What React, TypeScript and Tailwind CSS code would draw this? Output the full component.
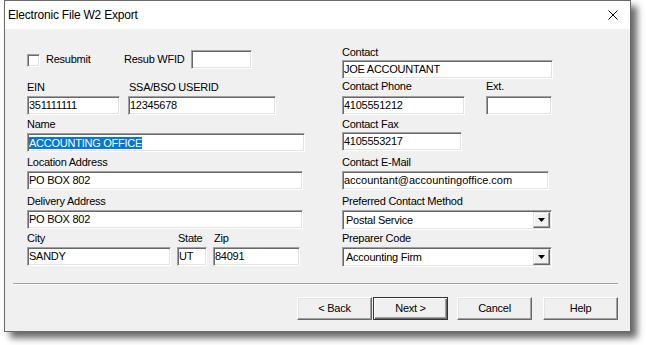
import React from 'react';

// classic sunken 3D edge used by text boxes, combos and the checkbox
const sunken =
  'border border-t-[#a0a0a0] border-l-[#a0a0a0] border-b-white border-r-white shadow-[inset_1px_1px_0_#696969,inset_-1px_-1px_0_#e3e3e3]';

const Label: React.FC<{ children: React.ReactNode; className?: string }> = ({ children, className = '' }) => (
  <div className={`h-[13px] leading-[13px] whitespace-nowrap ${className}`}>{children}</div>
);

const Field: React.FC<{ value?: string; className?: string; selected?: boolean }> = ({
  value = '',
  className = '',
  selected = false,
}) => (
  <div className={`h-[19px] bg-white ${sunken} flex items-center pl-[1px] overflow-hidden whitespace-nowrap ${className}`}>
    {selected ? <span className="bg-[#0078d7] text-white leading-[12px]">{value}</span> : <span>{value}</span>}
  </div>
);

const Combo: React.FC<{ value: string; className?: string }> = ({ value, className = '' }) => (
  <div className={`h-[20px] w-[210px] bg-white ${sunken} flex items-center ${className}`}>
    <span className="flex-1 pl-[3px] whitespace-nowrap">{value}</span>
    <div className="mr-[1px] h-[16px] w-[17px] bg-[#f0f0f0] border border-t-[#e3e3e3] border-l-[#e3e3e3] border-b-[#696969] border-r-[#696969] shadow-[inset_-1px_-1px_0_#a0a0a0,inset_1px_1px_0_#fff] flex items-center justify-center">
      <svg width="7" height="4" viewBox="0 0 7 4">
        <path d="M0 0h7L3.5 4z" fill="#000" />
      </svg>
    </div>
  </div>
);

const DlgButton: React.FC<{ label: string; isDefault?: boolean; className?: string }> = ({
  label,
  isDefault = false,
  className = '',
}) => (
  <button
    className={
      isDefault
        ? `h-[23px] w-[75px] bg-[#f0f0f0] border border-[#333] shadow-[inset_1px_1px_0_#fff,inset_-1px_-1px_0_#696969,inset_-2px_-2px_0_#a0a0a0] ${className}`
        : `h-[23px] w-[75px] bg-[#f0f0f0] border border-t-white border-l-white border-b-[#696969] border-r-[#696969] shadow-[inset_-1px_-1px_0_#a0a0a0,inset_1px_1px_0_#e3e3e3] ${className}`
    }
  >
    {label}
  </button>
);

const App: React.FC = () => {
  return (
    <div className="w-[646px] h-[345px] bg-white overflow-hidden font-['Liberation_Sans',Arial,sans-serif] text-[11px] tracking-[-0.25px] text-black">
      <div className="ml-[4px] w-[627px] h-[332px] border border-[#6a6a6a] flex flex-col shadow-[6px_6px_7px_rgba(0,0,0,0.6)]">
        {/* title bar */}
        <div className="h-[28px] bg-white flex items-center justify-between pl-[3px] pr-[12px]">
          <span className="text-[12px] tracking-[-0.2px]">Electronic File W2 Export</span>
          <svg width="10" height="10" viewBox="0 0 10 10">
            <path d="M0.5 0.5L9.5 9.5M9.5 0.5L0.5 9.5" stroke="#000" strokeWidth="1" />
          </svg>
        </div>

        <div className="flex-1 bg-[#f0f0f0] flex flex-col">
          <div className="h-[254px] flex pl-[22px]">
            {/* left column */}
            <div className="w-[315px] pt-[21px]">
              <div className="flex items-center h-[19px]">
                <div className="w-[97px] flex items-center">
                  <div className={`w-[13px] h-[13px] mt-[1px] bg-white ${sunken}`} />
                  <span className="ml-[6px]">Resubmit</span>
                </div>
                <span>Resub WFID</span>
                <Field className="ml-[7px] w-[61px]" />
              </div>

              <div className="mt-[12px] flex">
                <div className="w-[101px]">
                  <Label>EIN</Label>
                  <Field className="mt-[2px] w-[93px]" value="351111111" />
                </div>
                <div>
                  <Label className="pl-[1px]">SSA/BSO USERID</Label>
                  <Field className="mt-[2px] w-[148px]" value="12345678" />
                </div>
              </div>

              <Label className="mt-[3px]">Name</Label>
              <Field className="mt-[2px] w-[278px]" value="ACCOUNTING OFFICE" selected />

              <Label className="mt-[4px]">Location Address</Label>
              <Field className="mt-[2px] w-[276px]" value="PO BOX 802" />

              <Label className="mt-[5px]">Delivery Address</Label>
              <Field className="mt-[2px] w-[276px]" value="PO BOX 802" />

              <div className="mt-[3px] flex">
                <div className="w-[150px]">
                  <Label>City</Label>
                  <Field className="mt-[2px] w-[144px]" value="SANDY" />
                </div>
                <div className="w-[36px]">
                  <Label className="pl-[1px]">State</Label>
                  <Field className="mt-[2px] w-[30px]" value="UT" />
                </div>
                <div>
                  <Label className="pl-[1px]">Zip</Label>
                  <Field className="mt-[2px] w-[87px]" value="84091" />
                </div>
              </div>
            </div>

            {/* right column */}
            <div className="pt-[17px]">
              <Label>Contact</Label>
              <Field className="mt-[1px] w-[211px]" value="JOE ACCOUNTANT" />

              <div className="mt-[1px] flex">
                <div className="w-[144px]">
                  <Label>Contact Phone</Label>
                  <Field className="mt-[3px] w-[123px]" value="4105551212" />
                </div>
                <div>
                  <Label>Ext.</Label>
                  <Field className="mt-[3px] w-[66px]" />
                </div>
              </div>

              <Label className="mt-[3px]">Contact Fax</Label>
              <Field className="mt-[1px] w-[120px]" value="4105553217" />

              <Label className="mt-[5px]">Contact E-Mail</Label>
              <Field className="mt-[2px] w-[207px] tracking-normal" value="accountant@accountingoffice.com" />

              <Label className="mt-[5px]">Preferred Contact Method</Label>
              <Combo className="mt-[2px]" value="Postal Service" />

              <Label className="mt-[2px]">Preparer Code</Label>
              <Combo className="mt-[2px]" value="Accounting Firm" />
            </div>
          </div>

          <div className="ml-[8px] mr-[12px] border-t border-t-[#a0a0a0] border-b border-b-white" />

          <div className="mt-[12px] flex justify-end pr-[12px]">
            <DlgButton label="< Back" />
            <DlgButton label="Next >" isDefault className="ml-[1px]" />
            <DlgButton label="Cancel" className="ml-[9px]" />
            <DlgButton label="Help" className="ml-[11px]" />
          </div>
        </div>
      </div>
    </div>
  );
};

export default App;
